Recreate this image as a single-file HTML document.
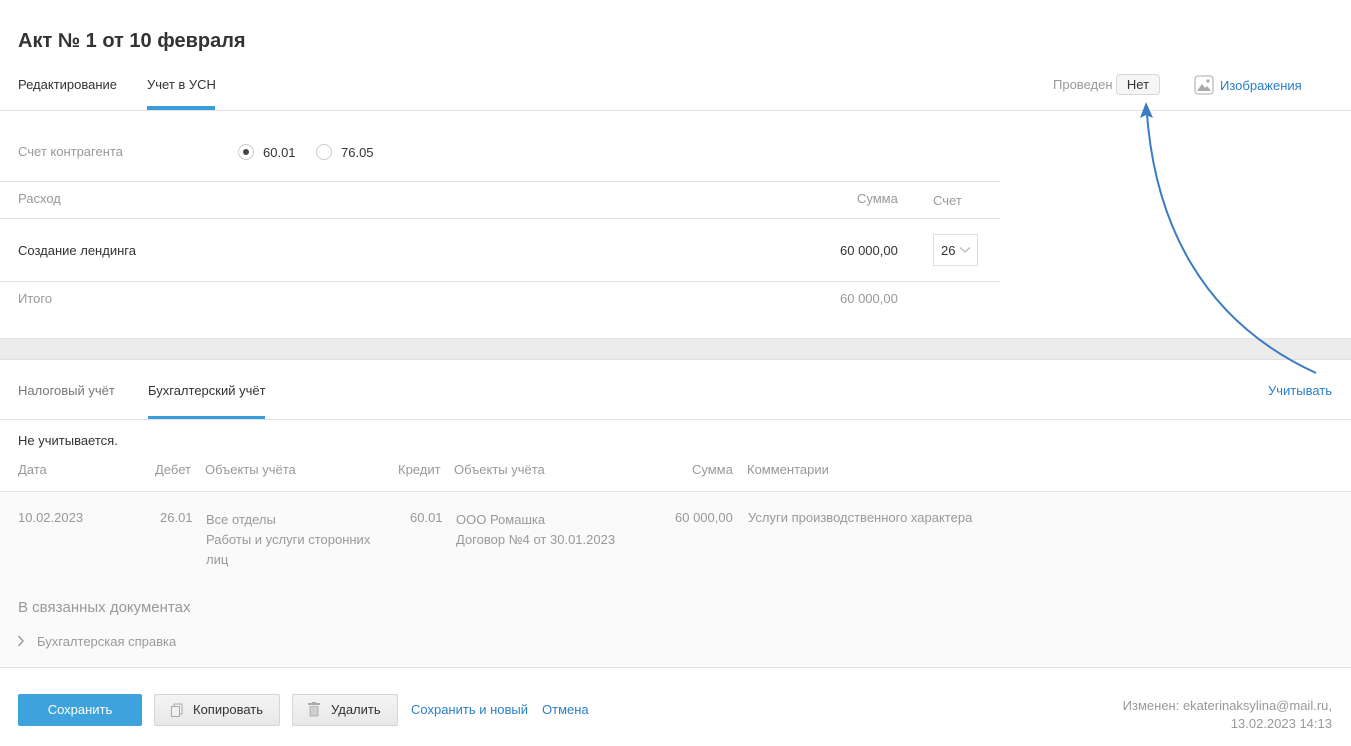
<!DOCTYPE html>
<html><head><meta charset="utf-8"><style>
*{margin:0;padding:0;box-sizing:border-box}
body{width:1351px;height:746px;background:#fff;font-family:"Liberation Sans",Arial,sans-serif;font-size:13px;color:#333;position:relative;overflow:hidden}
.a{position:absolute;white-space:nowrap}
.g{color:#999}
.b{color:#2a7fc9}
.hl{position:absolute;height:1px;background:#e2e2e2}
.btn{position:absolute;height:32px;border:1px solid #d6d6d6;border-radius:2px;background:linear-gradient(#f4f4f4,#e8e8e8);color:#333;font-size:13px;line-height:30px}
</style></head><body>
<div class="a" style="left:18px;top:30px;font-size:20px;font-weight:bold;color:#333">Акт № 1 от 10 февраля</div>
<div class="a" style="left:18px;top:77px">Редактирование</div>
<div class="a" style="left:147px;top:77px">Учет в УСН</div>
<div class="a" style="left:147px;top:106px;width:68px;height:4px;background:#3b9cdc"></div>
<div class="hl" style="left:0;top:110px;width:1351px"></div>
<div class="a g" style="left:1053px;top:77px">Проведен</div>
<div class="a" style="left:1116px;top:74px;width:44px;height:21px;border:1px solid #d6d6d6;border-radius:4px;background:#f6f6f6;text-align:center;line-height:19px">Нет</div>
<svg class="a" style="left:1194px;top:75px" width="20" height="20" viewBox="0 0 20 20"><rect x="1" y="1" width="18" height="18" rx="3" fill="#fff" stroke="#bbb" stroke-width="1.3"/><path d="M3 16 L8 9 L11 13 L13 11 L17 16Z" fill="#aaa"/><circle cx="14" cy="6" r="1.6" fill="#aaa"/></svg>
<div class="a b" style="left:1220px;top:78px">Изображения</div>

<div class="a g" style="left:18px;top:144px">Счет контрагента</div>
<div class="a" style="left:238px;top:144px;width:16px;height:16px;border:1px solid #ccc;border-radius:50%"></div>
<div class="a" style="left:243px;top:149px;width:6px;height:6px;background:#444;border-radius:50%"></div>
<div class="a" style="left:263px;top:145px">60.01</div>
<div class="a" style="left:316px;top:144px;width:16px;height:16px;border:1px solid #ccc;border-radius:50%"></div>
<div class="a" style="left:341px;top:145px">76.05</div>

<div class="hl" style="left:0;top:181px;width:1000px"></div>
<div class="a g" style="left:18px;top:191px">Расход</div>
<div class="a g" style="left:857px;top:191px">Сумма</div>
<div class="a g" style="left:933px;top:193px">Счет</div>
<div class="hl" style="left:0;top:218px;width:1000px"></div>
<div class="a" style="left:18px;top:243px">Создание лендинга</div>
<div class="a" style="left:840px;top:243px">60 000,00</div>
<div class="a" style="left:933px;top:234px;width:45px;height:32px;border:1px solid #ddd;background:#fff"></div>
<div class="a" style="left:941px;top:243px">26</div>
<svg class="a" style="left:959px;top:246px" width="12" height="8" viewBox="0 0 12 8"><path d="M1 1.5 L6 6 L11 1.5" fill="none" stroke="#bbb" stroke-width="1.3"/></svg>
<div class="hl" style="left:0;top:281px;width:1000px"></div>
<div class="a g" style="left:18px;top:291px">Итого</div>
<div class="a g" style="left:840px;top:291px">60 000,00</div>

<div class="a" style="left:0;top:338px;width:1351px;height:22px;background:#ececec;border-top:1px solid #e2e2e2;border-bottom:1px solid #e0e0e0"></div>
<div class="a" style="left:18px;top:383px;color:#777">Налоговый учёт</div>
<div class="a" style="left:148px;top:383px">Бухгалтерский учёт</div>
<div class="a" style="left:148px;top:416px;width:117px;height:3px;background:#3b9cdc"></div>
<div class="hl" style="left:0;top:419px;width:1351px"></div>
<div class="a b" style="left:1268px;top:383px">Учитывать</div>

<div class="a" style="left:18px;top:433px">Не учитывается.</div>
<div class="a g" style="left:18px;top:462px">Дата</div>
<div class="a g" style="left:155px;top:462px">Дебет</div>
<div class="a g" style="left:205px;top:462px">Объекты учёта</div>
<div class="a g" style="left:398px;top:462px">Кредит</div>
<div class="a g" style="left:454px;top:462px">Объекты учёта</div>
<div class="a g" style="left:692px;top:462px">Сумма</div>
<div class="a g" style="left:747px;top:462px">Комментарии</div>
<div class="a" style="left:0;top:491px;width:1351px;height:177px;background:#fafafa;border-top:1px solid #e2e2e2;border-bottom:1px solid #e0e0e0"></div>
<div class="a g" style="left:18px;top:510px">10.02.2023</div>
<div class="a g" style="left:160px;top:510px">26.01</div>
<div class="a g" style="left:206px;top:510px;line-height:20px">Все отделы<br>Работы и услуги сторонних<br>лиц</div>
<div class="a g" style="left:410px;top:510px">60.01</div>
<div class="a g" style="left:456px;top:510px;line-height:20px">ООО Ромашка<br>Договор №4 от 30.01.2023</div>
<div class="a g" style="left:675px;top:510px">60 000,00</div>
<div class="a g" style="left:748px;top:510px">Услуги производственного характера</div>
<div class="a g" style="left:18px;top:599px;font-size:15px">В связанных документах</div>
<svg class="a" style="left:17px;top:635px" width="8" height="12" viewBox="0 0 8 12"><path d="M1.5 1 L6 6 L1.5 11" fill="none" stroke="#999" stroke-width="1.4"/></svg>
<div class="a g" style="left:37px;top:634px">Бухгалтерская справка</div>

<div class="a" style="left:18px;top:694px;width:124px;height:32px;background:#3ea2dd;border-radius:2px;color:#fff;text-align:center;line-height:32px">Сохранить</div>
<div class="btn" style="left:154px;top:694px;width:126px"><svg style="position:absolute;left:15px;top:8px" width="14" height="15" viewBox="0 0 14 15"><rect x="4" y="1" width="8" height="10" fill="#f0f0f0" stroke="#aaa"/><rect x="1.5" y="3.5" width="8" height="10" fill="#f0f0f0" stroke="#aaa"/></svg><span style="position:absolute;left:38px">Копировать</span></div>
<div class="btn" style="left:292px;top:694px;width:106px"><svg style="position:absolute;left:15px;top:7px" width="12" height="15" viewBox="0 0 12 15"><rect x="0" y="1" width="12" height="2" fill="#aaa"/><rect x="4" y="0" width="4" height="2" fill="#aaa"/><rect x="1.5" y="4" width="9" height="10.5" fill="#bbb"/><path d="M4 5v8M6 5v8M8 5v8" stroke="#eee" stroke-width="0.8"/></svg><span style="position:absolute;left:38px">Удалить</span></div>
<div class="a b" style="left:411px;top:702px">Сохранить и новый</div>
<div class="a b" style="left:542px;top:702px">Отмена</div>
<div class="a g" style="right:19px;top:697px;text-align:right;line-height:18px">Изменен: ekaterinaksylina@mail.ru,<br>13.02.2023 14:13</div>

<svg class="a" style="left:0;top:0" width="1351" height="746"><path d="M1316 373 C1200 320 1155 220 1147 114" fill="none" stroke="#3a7cc4" stroke-width="2"/><path d="M1146 102 L1153 118 L1146 115 L1140 118Z" fill="#3a7cc4"/></svg>
</body></html>
